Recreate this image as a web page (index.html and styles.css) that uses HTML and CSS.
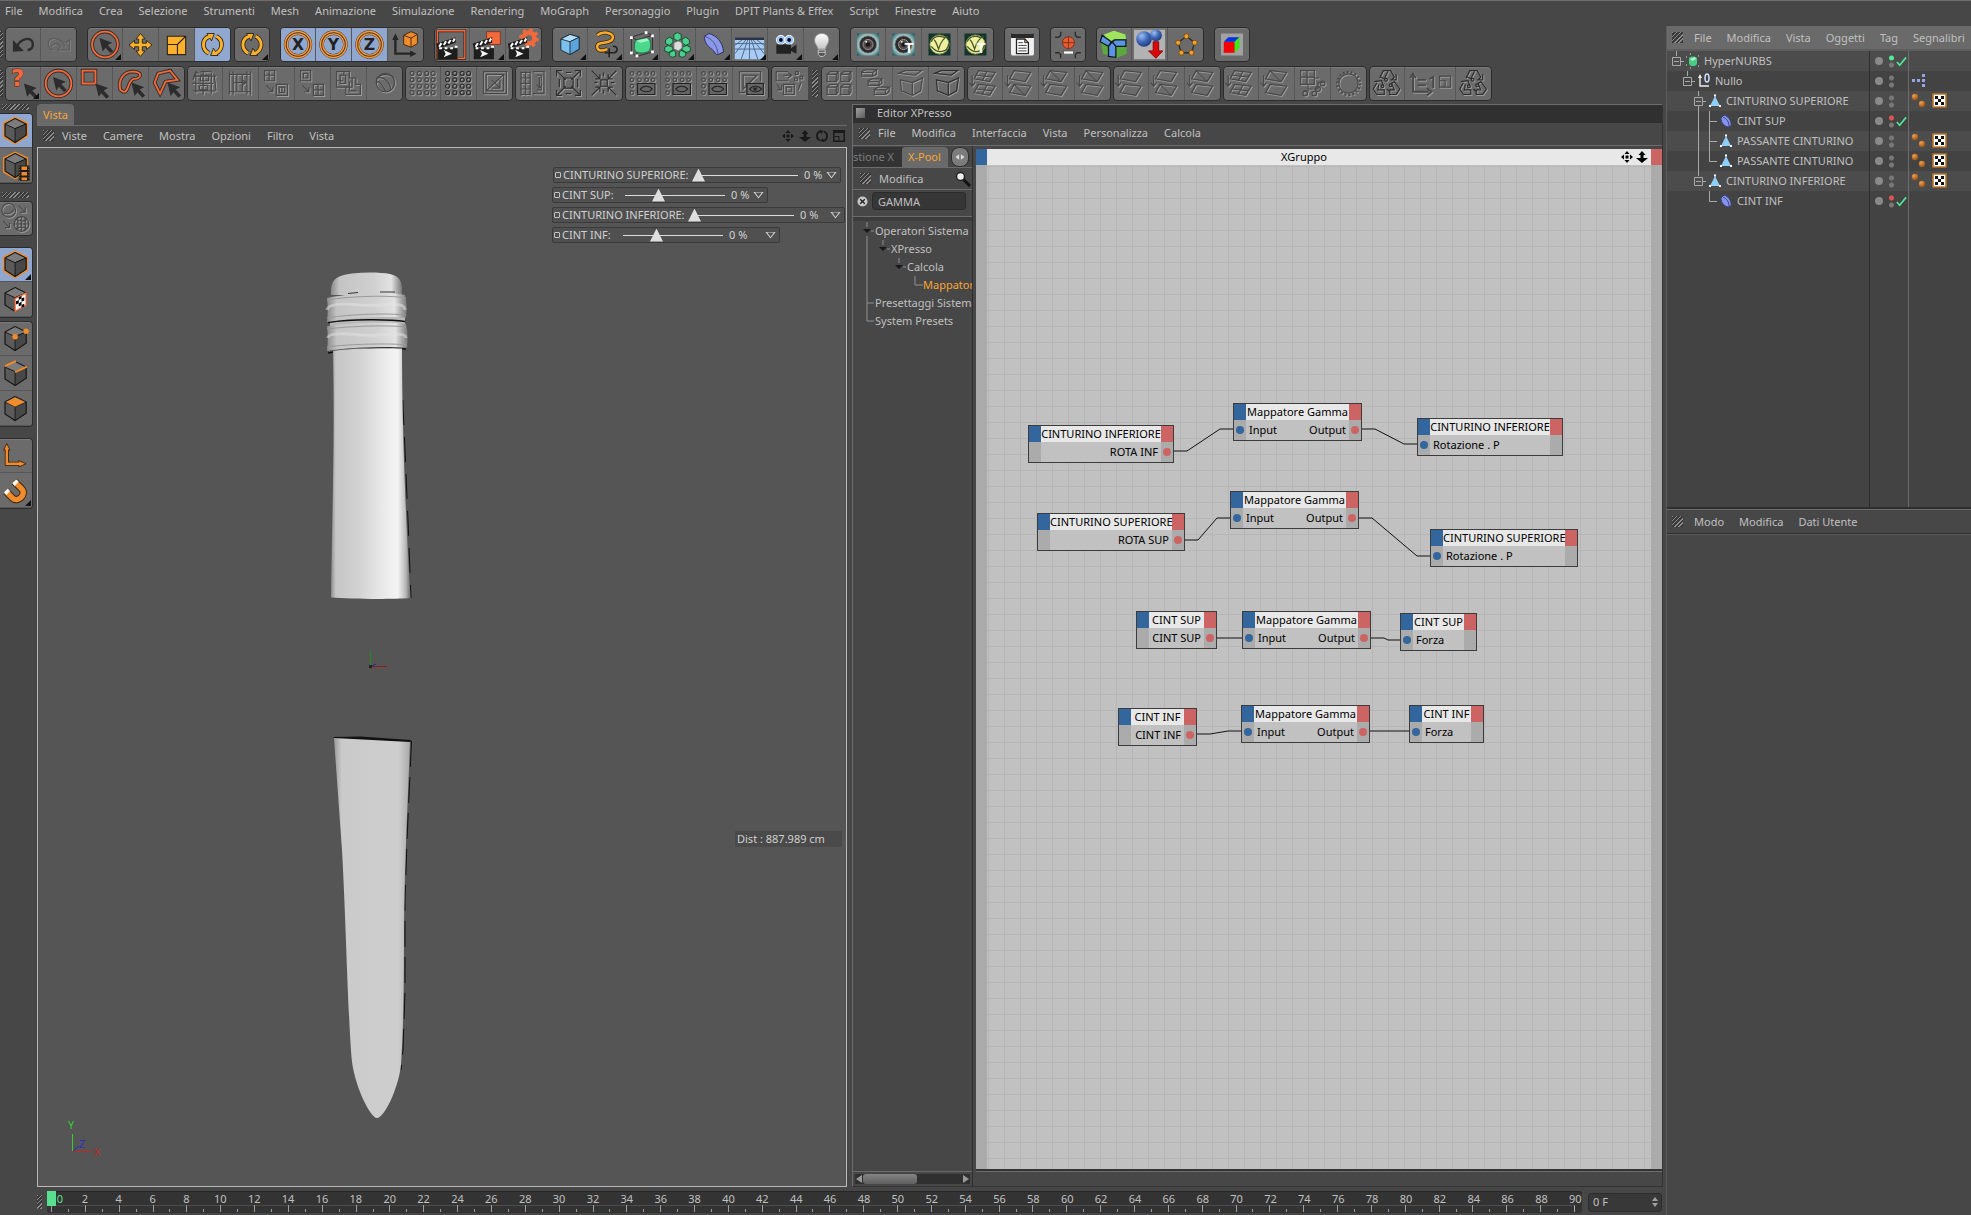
FILE: index.html
```html
<!doctype html>
<html lang="it">
<head>
	<meta charset="utf-8">
	<title>Editor XPresso</title>
	<meta name="viewport" content="width=device-width, initial-scale=1">
	<link rel="stylesheet" href="styles.css">
</head>
<body>
	<svg class="sprite" xmlns="http://www.w3.org/2000/svg">
		<defs>
			<linearGradient id="strap" x1="0" x2="1" y1="0" y2="0">
				<stop offset="0" stop-color="#8c8c8c"></stop>
				<stop offset=".06" stop-color="#c6c6c6"></stop>
				<stop offset=".35" stop-color="#d2d2d2"></stop>
				<stop offset=".7" stop-color="#ededed"></stop>
				<stop offset=".84" stop-color="#f4f4f4"></stop>
				<stop offset=".94" stop-color="#b8b8b8"></stop>
				<stop offset="1" stop-color="#6a6a6a"></stop>
			</linearGradient>
			<linearGradient id="strap-low" x1="0" x2="1" y1="0" y2="0">
				<stop offset="0" stop-color="#9a9a9a"></stop>
				<stop offset=".1" stop-color="#cacaca"></stop>
				<stop offset=".85" stop-color="#cecece"></stop>
				<stop offset="1" stop-color="#a8a8a8"></stop>
			</linearGradient>
			<linearGradient id="band" x1="0" x2="1" y1="0" y2="0">
				<stop offset="0" stop-color="#8a8a8a"></stop>
				<stop offset=".12" stop-color="#c4c4c4"></stop>
				<stop offset=".6" stop-color="#d0d0d0"></stop>
				<stop offset=".85" stop-color="#e2e2e2"></stop>
				<stop offset="1" stop-color="#777777"></stop>
			</linearGradient>
			<radialGradient id="ball" cx=".35" cy=".3" r=".8">
				<stop offset="0" stop-color="#9cc0f4"></stop>
				<stop offset=".5" stop-color="#3e68b8"></stop>
				<stop offset="1" stop-color="#1c3470"></stop>
			</radialGradient>
			<radialGradient id="bronze" cx=".35" cy=".3" r=".8">
				<stop offset="0" stop-color="#f0a04c"></stop>
				<stop offset="1" stop-color="#8a4a10"></stop>
			</radialGradient>
			<radialGradient id="lens" cx=".5" cy=".5" r=".7">
				<stop offset=".5" stop-color="#c8ecec"></stop>
				<stop offset="1" stop-color="#0f4a50"></stop>
			</radialGradient>
			<linearGradient id="glow" x1="0" x2="0" y1="0" y2="1">
				<stop offset="0" stop-color="#ffffff"></stop>
				<stop offset="1" stop-color="#c4c4c4"></stop>
			</linearGradient>
		</defs>

		<symbol id="cursor" viewBox="0 0 36 36">
			<path d="M12 11L26 16L21 18.500L27 25L24 27.500L18.500 21.500L15.500 25.500z" fill="#2c2c2c"></path>
		</symbol>
		<symbol id="undo" viewBox="0 0 36 36">
			<path d="M11 21C15 11 27 9 28.500 16C29.500 21 27 24 23 24" fill="none" stroke="#2c2c2c" stroke-width="2.600"></path>
			<path d="M7 13V26L19 25z" fill="#2c2c2c"></path>
		</symbol>
		<symbol id="redo" viewBox="0 0 36 36">
			<path d="M25 20C21 10 8 9 7 15C6 21 9 24 13 24M10 20C12 17 16 15 20 20L18 24H30V13L26 16"></path>
		</symbol>
		<symbol id="live" viewBox="0 0 36 36">
			<circle cx="18" cy="18" r="14" fill="none" stroke="#3a2c26" stroke-width="4"></circle>
			<circle cx="18" cy="18" r="14" fill="none" stroke="#f26a3c" stroke-width="2"></circle>
			<use href="#cursor"></use>
		</symbol>
		<symbol id="move" viewBox="0 0 36 36">
			<path d="M18 6l5 6h-3v4.500h4.500v-3l6 5-6 5v-3H20V25h3l-5 6-5-6h3v-4.500h-4.500v3l-6-5 6-5v3H16V12h-3z" fill="#fbb12c" stroke="#2c2416"></path>
		</symbol>
		<symbol id="scale" viewBox="0 0 36 36">
			<path d="M8 9H28V29H8zM8 18H19V29M19 18L28 9" fill="#fbb12c" stroke="#2c2416" stroke-width="1.200"></path>
		</symbol>
		<symbol id="rotate" viewBox="0 0 36 36">
			<path d="M14 27.500C6 23 6 12 15 9M22 9C30 13 30 24 21 28" fill="none" stroke="#2c2416" stroke-width="5"></path>
			<path d="M12 6H20L17 14zM24 30H16L19 22z" fill="#fbb12c" stroke="#2c2416"></path>
			<path d="M14 27.500C6 23 6 12 15 9M22 9C30 13 30 24 21 28" fill="none" stroke="#fbb12c" stroke-width="3.200"></path>
		</symbol>
		<symbol id="ring" viewBox="0 0 36 36">
			<circle cx="18" cy="18" r="13" fill="none" stroke="#4c3424" stroke-width="5"></circle>
			<circle cx="18" cy="18" r="14.200" fill="none" stroke="#f39a3c" stroke-width="1.600"></circle>
			<circle cx="18" cy="18" r="11.600" fill="none" stroke="#f39a3c" stroke-width="1.400"></circle>
		</symbol>
		<symbol id="coord" viewBox="0 0 36 36">
			<path d="M7 10V28H26" fill="none" stroke="#262626" stroke-width="2.600"></path>
			<path d="M3.500 13L7 6L10.500 13zM23 24.500L30 28L23 31.500z" fill="#262626"></path>
			<path d="M16 8L24 4L31 7V17L24 21L16 18z" fill="#f08c2c" stroke="#3c2410"></path>
			<path d="M16 8L24 11L31 7M24 11V21" fill="none" stroke="#3c2410"></path>
		</symbol>
		<symbol id="clap" viewBox="0 0 36 36">
			<path d="M2 22H24V34H2zM1 17L22 10V16L2 23z" fill="#1d1d1d"></path>
			<path d="M4 20.500l2.500-4M9 18.500l2.500-4M14 17l2.500-4M19 15l2-3.500M4 22h3M10 22h3M16 22h3M21 20.500h3" stroke="#fff" stroke-width="2.200"></path>
			<path d="M9 24l9 4-9 4 2-4z" fill="#f4f4f4"></path>
		</symbol>
		<symbol id="render" viewBox="0 0 36 36">
			<path d="M2 3H32V33H2z" fill="none" stroke="#3c2418" stroke-width="3"></path>
			<path d="M2 3H32V33H2z" fill="none" stroke="#f26a3c" stroke-width="1.400"></path>
			<use href="#clap"></use>
		</symbol>
		<symbol id="render-pic" viewBox="0 0 36 36">
			<path d="M17 4H32V18H17z" fill="#f26a3c" stroke="#7c3820"></path>
			<use href="#clap" x="1"></use>
		</symbol>
		<symbol id="render-set" viewBox="0 0 36 36">
			<circle cx="24" cy="11" r="6" fill="none" stroke="#f26a3c" stroke-width="5"></circle>
			<circle cx="24" cy="11" r="9" fill="none" stroke="#f26a3c" stroke-width="3.500" stroke-dasharray="3.500 3.560"></circle>
			<use href="#clap"></use>
		</symbol>
		<symbol id="cube" viewBox="0 0 36 36">
			<path d="M8 12L18 7L28 10V23L18 29L8 24z" fill="#7cc0f0" stroke="#1e2a34"></path>
			<path d="M8 12L18 7L28 10L18 15z" fill="#b4e0fc" stroke="#1e2a34"></path>
			<path d="M18 15V29L28 23V10z" fill="#5ca4dc" stroke="#1e2a34"></path>
		</symbol>
		<symbol id="spline" viewBox="0 0 36 36">
			<path d="M9 8C16 2 30 6 25 13C20 18 8 14 9 21C10 26 15 25 20 23" fill="none" stroke="#3a2a10" stroke-width="4.500"></path>
			<path d="M9 8C16 2 30 6 25 13C20 18 8 14 9 21C10 26 15 25 20 23" fill="none" stroke="#f9a92c" stroke-width="2.800"></path>
			<path d="M22 22V32M17 27H27C32 27 32 19 26 20" fill="none" stroke="#222" stroke-width="1.800"></path>
		</symbol>
		<symbol id="nurbs" viewBox="0 0 36 36">
			<path d="M7 10L23 5L30 8V26L13 31L7 27zM7 10L13 13L30 8M13 13V31" fill="none" stroke="#2e2e2e"></path>
			<path d="M11 15C12 12 25 10 27 13C29 16 28 24 26 25C23 28 13 28 11 25C10 22 10 18 11 15z" fill="#4cd88c" stroke="#1c6a40"></path>
			<path d="M12 14L24 11L26 14L17 16z" fill="#a0f4c4"></path>
			<path d="M5.500 9h3v3h-3zM21.500 3.500h3v3h-3zM28.500 7h3v3h-3zM28.500 24.500h3v3h-3zM11.500 29h3v3h-3zM5.500 25.500h3v3h-3z" fill="#fff"></path>
		</symbol>
		<symbol id="array" viewBox="0 0 36 36">
			<g fill="#4ad08c" stroke="#14482c">
				<path d="M14 7l4-2 4 2v5l-4 2-4-2zM5 13l4-3 4 2v4l-4 3-4-2zM23 12l4-2 4 3v4l-4 2-4-3zM4 21l4-2 5 2v4l-4 2-5-2zM23 21l5-2 4 2v4l-5 2-4-2zM9 26l4-2 3 2v5l-4 1-3-2zM20 26l3-2 4 2v4l-3 2-4-1z"></path>
			</g>
			<path d="M14 16l5-2 4 2v6l-4 3-5-2z" fill="#dcdcdc" stroke="#666"></path>
		</symbol>
		<symbol id="deform" viewBox="0 0 36 36">
			<path d="M8 9L13 6C21 8 28 15 29 26L23 29C20 29 20 28 19 26L15 22C12 20 8 16 8 9z" fill="#8c98e8" stroke="#282c58"></path>
			<path d="M8 9C16 11 22 18 23 29" fill="none" stroke="#444c90"></path>
		</symbol>
		<symbol id="floor" viewBox="0 0 36 36">
			<path d="M2 10H34V34H2z" fill="#a8ccf4"></path>
			<path d="M2 10H34V13H2z" fill="#2c3440"></path>
			<path d="M2 17H34M2 23H34M14 13L2 28M18 13V34M22 13L34 28M16 13L9 34M20 13L27 34M10 13L2 19M26 13L34 19" stroke="#4a6484" fill="none"></path>
		</symbol>
		<symbol id="camera" viewBox="0 0 36 36">
			<circle cx="13" cy="13" r="5" fill="#9cc4f4" stroke="#fff"></circle>
			<circle cx="22" cy="13" r="5" fill="#9cc4f4" stroke="#fff"></circle>
			<circle cx="13" cy="13" r="2"></circle><circle cx="22" cy="13" r="2"></circle>
			<path d="M8 18H24V22L30 18V28L24 25V28H8z" fill="#222"></path>
		</symbol>
		<symbol id="bulb" viewBox="0 0 36 36">
			<path d="M14 23C14 19 10 18 10.500 12C12 4 25 4 26 12C26 18 22.500 19 22.500 23z" fill="url(#glow)" stroke="#909090"></path>
			<path d="M14.500 24H22V29L20 31H16.500L14.500 29zM15 26.500H22" fill="#555" stroke="#ccc"></path>
		</symbol>
		<symbol id="lens-icon" viewBox="0 0 36 36">
			<path d="M6 6H30V30H6z" fill="url(#lens)"></path>
			<circle cx="18" cy="18" r="9.500" fill="#2c2c2c" stroke="#888"></circle>
			<circle cx="18" cy="18" r="5.500" fill="#544848" stroke="#a09898"></circle>
			<circle cx="18" cy="18" r="2.500" fill="#18181c"></circle><circle cx="16" cy="15" r="1" fill="#fff"></circle>
		</symbol>
		<symbol id="vray" viewBox="0 0 36 36">
			<path d="M6 6H30V30H6z" fill="#12362c"></path>
			<circle cx="18" cy="18" r="10.500" fill="#ecf0a0" stroke="#7c8450"></circle>
			<path d="M12 13C14 14 15 18 17 23C19 16 22 11 27 9M9 20C16 29 27 27 28 17M9 15C12 8 21 8 24 11" fill="none" stroke="#4c5424" stroke-width="1.400"></path>
		</symbol>
		<symbol id="doc" viewBox="0 0 36 36">
			<rect x="6" y="6" width="25" height="24" rx="2" fill="#f0f0f0"></rect>
			<path d="M6 6H31V11H6z" fill="#2a2a2a"></path>
			<path d="M12 12H21L25 16V28H12z" fill="#fff" stroke="#222" stroke-width="1.400"></path>
			<path d="M21 12V16H25z" fill="#e0a050" stroke="#222"></path>
			<path d="M14 16H19M14 19H23M14 22H23M14 25H23" stroke="#333"></path>
		</symbol>
		<symbol id="basket" viewBox="0 0 36 36">
			<path d="M4 10H8L10 8V4M32 10H28L26 8V4M4 27H8L10 29V33M32 27H28L26 29V33" fill="none" stroke="#2e2e2e" stroke-width="1.600"></path>
			<circle cx="18.500" cy="16" r="6.500" fill="#e85c34" stroke="#7c2c14"></circle>
			<path d="M12 16H25M18.500 9.500V22.500" stroke="#7c2c14"></path>
			<path d="M13 25H24V28.500H13z" fill="#fff" stroke="#555"></path>
		</symbol>
		<symbol id="greenbox" viewBox="0 0 36 36">
			<path d="M3 11L17 3L31 7L32 28L20 33L6 28z" fill="#5ca83c"></path>
			<path d="M7 7L18 3L30 7L31 12L18 12L12 16z" fill="#a0e45c"></path>
			<path d="M5 8L15 15L12 20L3 15zM19 13H31V20H20L16 15zM12 20L16 15L20 20V32L12 31z" fill="#5c94e4" stroke="#101820" stroke-width="1.400"></path>
		</symbol>
		<symbol id="balls" viewBox="0 0 36 36">
			<path d="M1 2H35V34H1z" fill="#b2b2b2"></path>
			<circle cx="12" cy="12" r="8.500" fill="url(#ball)"></circle>
			<circle cx="25" cy="8" r="6.500" fill="url(#ball)"></circle>
			<path d="M22 15H28V25H32.500L25 33L17 25H22z" fill="#dc0808" stroke="#8c0404"></path>
		</symbol>
		<symbol id="penta" viewBox="0 0 36 36">
			<path d="M19 9L28 16L24.500 27H13.500L10 16z" fill="none" stroke="#2e2e2e" stroke-width="1.500"></path>
			<g fill="#f8a02c" stroke="#7c4c10"><circle cx="19" cy="9" r="2.700"></circle><circle cx="28" cy="16" r="2.700"></circle><circle cx="24.500" cy="27" r="2.700"></circle><circle cx="13.500" cy="27" r="2.700"></circle><circle cx="10" cy="16" r="2.700"></circle></g>
		</symbol>
		<symbol id="rgb" viewBox="0 0 36 36">
			<path d="M6 6H30V30H6z" fill="#a2a2a2"></path>
			<path d="M9 15H21V27H9z" fill="#f40000"></path><path d="M9 15L14 10H26L21 15z" fill="#0030e0"></path><path d="M21 15L26 10V21L21 27z" fill="#2cf400"></path>
		</symbol>
		<symbol id="rectsel" viewBox="0 0 36 36">
			<path d="M5 4H19V18H5z" fill="none" stroke="#3a2c26" stroke-width="4"></path><path d="M5 4H19V18H5z" fill="none" stroke="#f26a3c" stroke-width="2"></path>
			<use href="#cursor" x="7" y="7"></use>
		</symbol>
		<symbol id="lasso" viewBox="0 0 36 36">
			<path d="M7 25C4 15 10 5 20 5C32 5 30 13 22 13C15 14 16 29 10 27z" fill="none" stroke="#3a2c26" stroke-width="4"></path><path d="M7 25C4 15 10 5 20 5C32 5 30 13 22 13C15 14 16 29 10 27z" fill="none" stroke="#f26a3c" stroke-width="2"></path>
			<use href="#cursor" x="7" y="6"></use>
		</symbol>
		<symbol id="polysel" viewBox="0 0 36 36">
			<path d="M9 7L22 4L30 14L17 16L11 29L5 17z" fill="none" stroke="#3a2c26" stroke-width="4"></path><path d="M9 7L22 4L30 14L17 16L11 29L5 17z" fill="none" stroke="#f26a3c" stroke-width="2"></path>
			<use href="#cursor" x="7" y="6"></use>
		</symbol>

		<!-- pressed icons, coloured by .emboss -->
		<symbol id="e-loop" viewBox="0 0 36 36"><path d="M8 6V28M16 4V30M25 6V29M5 10H30M4 18H27M5 26H29M5 14l3-9 3 2M13 5h12M28 8l2 18M6 26h18M13 9h9v6h-9zM12 20h9v5h-9z"></path></symbol>
		<symbol id="e-ring" viewBox="0 0 36 36"><path d="M6 5V30M10 5V30M25 5V30M29 5V30M6 8H29M6 27H29M14 8V27M20 8V27M11 17H23M20 14L24 17L20 20"></path></symbol>
		<symbol id="e-grow" viewBox="0 0 36 36"><path d="M5 4H16V15H5zM10 4V15M5 9H16M18 19H30V31H18zM21 22H27V28H21zM24 22V28M7 20L14 27M14 22V27H9"></path></symbol>
		<symbol id="e-shrink" viewBox="0 0 36 36"><path d="M5 4H16V15H5zM8 7H13V12H8zM19 19H30V31H19zM24 19V31M19 25H30M7 20L14 27M14 22V27H9"></path></symbol>
		<symbol id="e-fill" viewBox="0 0 36 36"><path d="M5 5H19V12H26V19H31V30H15V22H5zM9 9H15V18H9zM19 16V26H27M5 15H12M13 5V9M15 22H22V12"></path></symbol>
		<symbol id="e-sphere" viewBox="0 0 36 36"><circle cx="19" cy="17" r="10"></circle><path d="M9 13C14 7 24 7 28 12M11 12C17 10 25 18 25 25M9 17C13 13 18 25 20 27"></path></symbol>
		<symbol id="e-dots" viewBox="0 0 36 36"><g><circle cx="6" cy="7" r="2.200"></circle><circle cx="14" cy="7" r="2.200"></circle><circle cx="22" cy="7" r="2.200"></circle><circle cx="29" cy="7" r="2.200"></circle><circle cx="6" cy="14" r="2.200"></circle><circle cx="14" cy="14" r="2.200"></circle><circle cx="22" cy="14" r="2.200"></circle><circle cx="29" cy="14" r="2.200"></circle><circle cx="6" cy="21" r="2.200"></circle><circle cx="14" cy="21" r="2.200"></circle><circle cx="22" cy="21" r="2.200"></circle><circle cx="29" cy="21" r="2.200"></circle><circle cx="6" cy="28" r="2.200"></circle><circle cx="14" cy="28" r="2.200"></circle><circle cx="22" cy="28" r="2.200"></circle><circle cx="29" cy="28" r="2.200"></circle></g></symbol>
		<symbol id="e-poly" viewBox="0 0 36 36"><path d="M6 5H31V29H6zM9 8H28V26H9zM9 26L28 8M15 14L24 23M24 14V23H15"></path></symbol>
		<symbol id="e-convert" viewBox="0 0 36 36"><path d="M18 5H30V29H18M22 9H27V25H22M25 11V22M22 19L25 23L28 19M4 6H15M4 12H15M4 18H15M4 24H15M4 30H15M5 5V31M10 5V31M15 5V31"></path></symbol>
		<symbol id="e-out" viewBox="0 0 36 36"><path d="M6 5L15 14M30 5L21 14M6 30L15 21M30 30L21 21M5 10V4H11M25 4H31V10M5 25V31H11M25 31H31V25M13 12H23V23H13zM15 6H21M15 29H21M8 13V22M28 13V22"></path></symbol>
		<symbol id="e-in" viewBox="0 0 36 36"><path d="M4 4L13 13M31 4L22 13M4 31L13 22M31 31L22 22M13 8V13H8M22 8V13H27M8 22H13V27M27 22H22V27M14 14H21V21H14zM7 17H10M25 17H29M17 6V10M17 25V29"></path></symbol>
		<symbol id="e-dotseye" viewBox="0 0 36 36"><g><circle cx="6" cy="7" r="2"></circle><circle cx="14" cy="7" r="2"></circle><circle cx="22" cy="7" r="2"></circle><circle cx="29" cy="7" r="2"></circle><circle cx="6" cy="14" r="2"></circle><circle cx="14" cy="14" r="2"></circle><circle cx="22" cy="14" r="2"></circle><circle cx="29" cy="14" r="2"></circle><circle cx="6" cy="21" r="2"></circle><circle cx="6" cy="28" r="2"></circle></g><path d="M12 18H31V30H12zM15 24C18 20 25 20 28 24C25 28 18 28 15 24z" fill="#666" stroke="#222" stroke-width="1.300"></path></symbol>
		<symbol id="e-polyeye" viewBox="0 0 36 36"><path d="M6 5H29V15M6 5V28H12M10 9H25L10 24z"></path><path d="M14 18H32V30H14zM17 24C20 20 27 20 30 24C27 28 20 28 17 24z" fill="#666" stroke="#222" stroke-width="1.300"></path><circle cx="23" cy="24" r="2" fill="#222"></circle></symbol>
		<symbol id="e-swap" viewBox="0 0 36 36"><path d="M4 5H17M4 5V15H17M12 9H20M17 6L21 9L17 12M25 5h3v3h-3zM30 10h3v3h-3zM24 12h3v3h-3zM12 19H24V30H12zM15 22H21V27H15zM5 19L9 25M31 17L28 25M5 25H10V20"></path></symbol>
		<symbol id="e-cubes" viewBox="0 0 36 36"><path d="M5 8L8 5H17L15 8zM5 8H15V16H5zM15 16L17 13V5M20 8L23 5H31L29 8zM20 8H29V16H20zM29 16L31 13V5M5 22L8 19H17L15 22zM5 22H15V30H5zM15 30L17 27V19M20 22L23 19H31L29 22zM20 22H29V30H20zM29 30L31 27V19"></path></symbol>
		<symbol id="e-bricks" viewBox="0 0 36 36"><path d="M4 5L8 3H20L16 6H4zM4 6V10H16V6M16 10L20 8V3M11 15L15 13H26L23 16H11zM11 16V20H23V16M23 20L26 18V13M18 24L22 22H34L30 25H18zM18 25V30H30V25M30 30L34 27V22"></path></symbol>
		<symbol id="e-open" viewBox="0 0 36 36"><path d="M7 14L20 17L31 12L29 26L20 31L8 26zM20 17V31M5 7L12 4H30L23 9z"></path></symbol>
		<symbol id="e-quad" viewBox="0 0 36 36"><path d="M4 9V20M1 17L4 21L7 17M11 4L29 6L23 16L6 13zM11 19L29 21L23 31L6 28z"></path></symbol>
		<symbol id="e-grid" viewBox="0 0 36 36"><use href="#e-quad"></use><path d="M9 9L26 11M20 5L15 15M9 24L26 26M20 20L15 30"></path></symbol>
		<symbol id="e-diag" viewBox="0 0 36 36"><use href="#e-quad"></use><path d="M11 4L23 16"></path></symbol>
		<symbol id="e-diag2" viewBox="0 0 36 36"><use href="#e-quad"></use><path d="M11 19L23 31"></path></symbol>
		<symbol id="e-map" viewBox="0 0 36 36"><path d="M5 4H20V19H5zM12 4V19M5 11H20M20 12H25M13 20V24H18M8 26H14M20 24H24V17H30"></path><circle cx="29" cy="18" r="2.500"></circle><circle cx="24" cy="24" r="2.500"></circle><circle cx="10" cy="29" r="2.500"></circle><circle cx="20" cy="29" r="2.500"></circle></symbol>
		<symbol id="e-gear" viewBox="0 0 36 36"><circle cx="18" cy="18" r="10.500"></circle><circle cx="18" cy="18" r="12.500" stroke-width="2.500" stroke-dasharray="2 2.360"></circle></symbol>
		<symbol id="e-recycle" viewBox="0 0 36 36"><path d="M10 12L14 4H22L26 11L23 14M19 5L15 13L10 10M26 16L32 24L28 30H21V25H26L23 18zM4 16L12 15L14 20M9 19L8 25H15V30H7L3 24L7 17M21 27L18 24M22 14H28V8"></path><circle cx="17" cy="14" r="1.500"></circle><circle cx="22" cy="20" r="1.500"></circle><circle cx="13" cy="21" r="1.500"></circle></symbol>
		<symbol id="e-one" viewBox="0 0 51 36"><path d="M7 10V27H24M4 12L7 7L10 12M22 23L27 27L22 31M12 14H21M12 20H21M25 13L29 11V23" stroke-width="2"></path><path d="M36 10H48V22H36zM36 15H42V22"></path></symbol>
		<symbol id="e-globe" viewBox="0 0 32 36"><circle cx="8" cy="9" r="7.500"></circle><circle cx="22" cy="24" r="8"></circle><path d="M2 12C7 14 12 12 14 8M14 24H30M22 16V32M16 19C20 21 25 21 28 19M16 29C20 27 25 27 28 29M18 17V31M26 17V31M19 4L26 11M26 6V11H21M2 21L9 28M9 23V28H4"></path></symbol>

		<!-- grey box used by the mode palette -->
		<symbol id="box" viewBox="0 0 32 36">
			<path d="M4 11L15 5L27 11V23L15 31L4 24z" fill="#5a5a5a" stroke="#161616" stroke-width="1.300"></path>
			<path d="M4 11L15 5L27 11L15 16z" fill="#7c7c7c" stroke="#161616"></path>
			<path d="M15 16V31L27 23V11z" fill="#484848" stroke="#161616"></path>
		</symbol>
		<symbol id="box-hot" viewBox="0 0 32 36">
			<path d="M3 10L15 4L28 10V24L15 32L3 25z" fill="none" stroke="#f08c2c" stroke-width="2.400"></path>
			<use href="#box"></use>
		</symbol>
		<symbol id="box-film" viewBox="0 0 32 36">
			<use href="#box-hot"></use>
			<path d="M19 18H31V35H19z" fill="#1e1e1e"></path><path d="M22 19H28V23H22zM22 25H28V29H22zM22 31H28V34H22z" fill="#f08c2c"></path>
			<path d="M20 19V35M30 19V35" stroke="#c87828" stroke-dasharray="1 2"></path>
		</symbol>
		<symbol id="box-check" viewBox="0 0 32 36">
			<use href="#box"></use>
			<path d="M15 17L27 11V24L15 31z" fill="#fff" stroke="#f06c3c" stroke-width="1.500"></path>
			<path d="M16 20l3-1.500v3.500l-3 1.500zM22 17l3-1.500v3.500l-3 1.500zM19 22l3-1.500v3.500l-3 1.500zM22 24l3-1.500v3l-3 1.500zM19 15.500l3-1.500v3l-3 1.500z" fill="#000"></path>
		</symbol>
		<symbol id="box-points" viewBox="0 0 32 36">
			<use href="#box"></use>
			<circle cx="15" cy="16" r="3" fill="#f08c2c"></circle><circle cx="27" cy="10" r="3" fill="#f08c2c"></circle>
		</symbol>
		<symbol id="box-edge" viewBox="0 0 32 36"><use href="#box"></use><path d="M4 10L16 4.500M15 16.500L28 10.500" stroke="#f08c2c" stroke-width="2.400"></path></symbol>
		<symbol id="box-face" viewBox="0 0 32 36"><use href="#box"></use><path d="M5 11L15 6L26 11L15 16z" fill="#f08c2c"></path></symbol>
		<symbol id="axis" viewBox="0 0 32 36">
			<path d="M6 10V27H21" fill="none" stroke="#3c2410" stroke-width="4.500"></path>
			<path d="M2.500 12L6 5L9.500 12zM19 23.500L27 27L19 30.500z" fill="#f08c2c" stroke="#3c2410"></path>
			<path d="M6 10V27H21" fill="none" stroke="#f08c2c" stroke-width="2.600"></path>
		</symbol>
		<symbol id="magnet" viewBox="0 0 32 36">
			<path d="M5 19L12 26C18 32 28 22 22 16L14 8" fill="none" stroke="#3c2410" stroke-width="8"></path>
			<path d="M5 19L12 26C18 32 28 22 22 16L14 8" fill="none" stroke="#f08c2c" stroke-width="6"></path>
			<path d="M3 20L7 16L9.500 18.500L5.500 23zM12 10L16.500 6L19 8.500L14.500 13z" fill="#fff"></path>
		</symbol>

		<symbol id="v-move" viewBox="0 0 12 12"><path d="M6 0l2.500 3h-5zM6 12l2.500-3h-5zM0 6l3-2.500v5zM12 6l-3-2.500v5zM4.500 4.500h3v3h-3z"></path></symbol>
		<symbol id="v-zoom" viewBox="0 0 12 12"><path d="M6 0l3.500 4H7.500v3H12L6 12L0 7H4.500V4H2.500z"></path></symbol>
		<symbol id="v-turn" viewBox="0 0 12 12"><path d="M4 10.500A5 5 0 0 1 5 1M8 1.500A5 5 0 0 1 7 11" fill="none" stroke="currentColor" stroke-width="1.800"></path><path d="M4 0l4 1-3 3zM8 12l-4-1 3-3z"></path></symbol>
		<symbol id="v-full" viewBox="0 0 12 12"><path d="M0 0h12v12H0zM1.500 3v7.500h9V3z" fill-rule="evenodd"></path><path d="M1.500 6.500H6v4" fill="none" stroke="currentColor"></path></symbol>

		<symbol id="o-nurbs" viewBox="0 0 14 16"><path d="M0 4h1M4 1h1M12 3h1M0 12h1M12 13h1M4 15h1" stroke="#ddd"></path><path d="M3 5C5 3 9 3 11 5V11C9 14 5 14 3 11z" fill="#46cc84"></path><path d="M4 6L9 4L10 6L6 8z" fill="#b0f8d0"></path></symbol>
		<symbol id="o-null" viewBox="0 0 14 16"><path d="M3 3V13H12" fill="none" stroke="#eee" stroke-width="1.400"></path><path d="M1 5L3 1L5 5z" fill="#eee"></path><ellipse cx="10" cy="5" rx="2" ry="4" fill="none" stroke="#cfe0ff" stroke-width="1.500"></ellipse></symbol>
		<symbol id="o-poly" viewBox="0 0 14 16"><path d="M7 3L12 13H2z" fill="#90d0f8"></path><path d="M6 1.500h2v2H6zM1 12h2v2H1zM11 12h2v2h-2z" fill="#fff"></path></symbol>
		<symbol id="o-bend" viewBox="0 0 14 16"><path d="M2 5L5 2C9 3 13 8 12 13L9 14C5 13 2 10 2 5z" fill="#8494ec" stroke="#39407c"></path><path d="M4 4C8 6 10 9 10 13" fill="none" stroke="#39407c"></path></symbol>
		<symbol id="o-tags" viewBox="0 0 36 20"><circle cx="4" cy="6" r="3.200" fill="url(#bronze)"></circle><circle cx="11" cy="13" r="3.200" fill="url(#bronze)"></circle>
			<path d="M22 3H35V16H22z" fill="#fff" stroke="#b87028" stroke-width="1.600"></path><path d="M24 5h3v3h-3zM30 5h3v3h-3zM27 8h3v3h-3zM24 11h3v3h-3zM30 11h3v3h-3z" fill="#111"></path></symbol>
		<symbol id="o-xp" viewBox="0 0 36 20"><path d="M1 8h3v3H1zM6 8h3v3H6zM11 8h3v3h-3zM11 3h3v3h-3zM11 13h3v3h-3z" fill="#94a4e4"></path></symbol>
		<symbol id="o-tick" viewBox="0 0 12 12"><path d="M1 6.500L4 10L11 1.500" fill="none" stroke="#50e898" stroke-width="1.800"></path></symbol>
	</svg>

	<nav class="menu main-menu">
		<a href="#">File</a><a href="#">Modifica</a><a href="#">Crea</a><a href="#">Selezione</a><a href="#">Strumenti</a><a href="#">Mesh</a><a href="#">Animazione</a><a href="#">Simulazione</a><a href="#">Rendering</a><a href="#">MoGraph</a><a href="#">Personaggio</a><a href="#">Plugin</a><a href="#">DPIT Plants &amp; Effex</a><a href="#">Script</a><a href="#">Finestre</a><a href="#">Aiuto</a>
	</nav>

	<main>
		<div class="toolbar top">
			<i class="grip tall"></i>
			<div class="group"><button aria-label="Annulla"><svg><use href="#undo"></use></svg></button><button aria-label="Ripeti"><svg class="emboss"><use href="#redo"></use></svg></button></div>
			<div class="group"><button class="more" aria-label="Selezione"><svg><use href="#live"></use></svg></button><button aria-label="Muovi"><svg><use href="#move"></use></svg></button><button aria-label="Scala"><svg><use href="#scale"></use></svg></button><button class="on" aria-label="Ruota"><svg><use href="#rotate"></use></svg></button></div>
			<div class="group near"><button class="more" aria-label="Ultimo strumento"><svg><use href="#rotate"></use></svg></button></div>
			<div class="group"><button class="on" aria-label="Asse X"><svg viewBox="0 0 36 36"><use href="#ring"></use><text class="axis-letter" x="18" y="24">X</text></svg></button><button class="on" aria-label="Asse Y"><svg viewBox="0 0 36 36"><use href="#ring"></use><text class="axis-letter" x="18" y="24">Y</text></svg></button><button class="on" aria-label="Asse Z"><svg viewBox="0 0 36 36"><use href="#ring"></use><text class="axis-letter" x="18" y="24">Z</text></svg></button><button aria-label="Coordinate"><svg><use href="#coord"></use></svg></button></div>
			<div class="group"><button aria-label="Renderizza vista"><svg><use href="#render"></use></svg></button><button class="more" aria-label="Renderizza"><svg><use href="#render-pic"></use></svg></button><button aria-label="Settaggi di rendering"><svg><use href="#render-set"></use></svg></button></div>
			<div class="group"><button class="more" aria-label="Cubo"><svg><use href="#cube"></use></svg></button><button class="more" aria-label="Spline"><svg><use href="#spline"></use></svg></button><button class="more" aria-label="NURBS"><svg><use href="#nurbs"></use></svg></button><button class="more" aria-label="Serie"><svg><use href="#array"></use></svg></button><button class="more" aria-label="Deformatore"><svg><use href="#deform"></use></svg></button><button class="more" aria-label="Pavimento"><svg><use href="#floor"></use></svg></button><button class="more" aria-label="Camera"><svg><use href="#camera"></use></svg></button><button class="more" aria-label="Luce"><svg><use href="#bulb"></use></svg></button></div>
			<div class="group"><button aria-label="Camera VRay"><svg><use href="#lens-icon"></use></svg></button><button aria-label="Tag camera"><svg viewBox="0 0 36 36"><use href="#lens-icon"></use><text class="tag-letter" x="24" y="27">T</text></svg></button><button aria-label="VRay"><svg><use href="#vray"></use></svg></button><button aria-label="Tag VRay"><svg viewBox="0 0 36 36"><use href="#vray"></use><text class="tag-letter" x="24" y="27">T</text></svg></button></div>
			<div class="group"><button aria-label="Script"><svg><use href="#doc"></use></svg></button></div>
			<div class="group"><button aria-label="Reticolo"><svg><use href="#basket"></use></svg></button></div>
			<div class="group"><button aria-label="Smusso"><svg><use href="#greenbox"></use></svg></button><button aria-label="Posa"><svg><use href="#balls"></use></svg></button><button aria-label="Punti"><svg><use href="#penta"></use></svg></button></div>
			<div class="group"><button aria-label="RGB"><svg><use href="#rgb"></use></svg></button></div>
		</div>

		<div class="toolbar second">
			<i class="grip tall"></i>
			<div class="group"><button class="more" aria-label="Aiuto selezione"><svg viewBox="0 0 36 36"><text class="help-mark" x="5" y="21">?</text><use href="#cursor" x="7" y="7"></use></svg></button><button aria-label="Selezione viva"><svg><use href="#live"></use></svg></button><button aria-label="Rettangolo"><svg><use href="#rectsel"></use></svg></button><button aria-label="Lazo"><svg><use href="#lasso"></use></svg></button><button aria-label="Poligono"><svg><use href="#polysel"></use></svg></button></div>
			<div class="group emboss"><button aria-label="Loop"><svg><use href="#e-loop"></use></svg></button><button aria-label="Anello"><svg><use href="#e-ring"></use></svg></button><button aria-label="Espandi"><svg><use href="#e-grow"></use></svg></button><button aria-label="Riduci"><svg><use href="#e-shrink"></use></svg></button><button aria-label="Riempi"><svg><use href="#e-fill"></use></svg></button><button aria-label="Phong"><svg><use href="#e-sphere"></use></svg></button></div>
			<div class="group emboss"><button aria-label="Tutto"><svg><use href="#e-dots"></use></svg></button><button class="deep" aria-label="Nulla"><svg><use href="#e-dots"></use></svg></button><button aria-label="Inverti"><svg><use href="#e-poly"></use></svg></button></div>
			<div class="group emboss"><button aria-label="Converti"><svg><use href="#e-convert"></use></svg></button><button class="deep" aria-label="Allarga"><svg><use href="#e-out"></use></svg></button><button class="deep" aria-label="Stringi"><svg><use href="#e-in"></use></svg></button></div>
			<div class="group emboss"><button aria-label="Nascondi"><svg><use href="#e-dotseye"></use></svg></button><button aria-label="Nascondi altri"><svg><use href="#e-dotseye"></use></svg></button><button aria-label="Mostra"><svg><use href="#e-dotseye"></use></svg></button><button aria-label="Mostra poligoni"><svg><use href="#e-polyeye"></use></svg></button></div>
			<div class="group emboss cut"><button aria-label="Scambia"><svg><use href="#e-swap"></use></svg></button></div>
			<i class="grip tall mid"></i>
			<div class="group emboss"><button aria-label="Cloner"><svg><use href="#e-cubes"></use></svg></button><button aria-label="Mattoni"><svg><use href="#e-bricks"></use></svg></button><button aria-label="Apri"><svg><use href="#e-open"></use></svg></button><button class="deep" aria-label="Chiudi"><svg><use href="#e-open"></use></svg></button></div>
			<div class="group emboss"><button aria-label="Suddividi"><svg><use href="#e-grid"></use></svg></button><button aria-label="Taglia"><svg><use href="#e-diag2"></use></svg></button><button aria-label="Coltello"><svg><use href="#e-diag"></use></svg></button><button aria-label="Ponte"><svg><use href="#e-diag"></use></svg></button></div>
			<div class="group emboss"><button aria-label="Quad"><svg><use href="#e-quad"></use></svg></button><button aria-label="Triangola"><svg><use href="#e-diag2"></use></svg></button><button aria-label="Detriangola"><svg><use href="#e-diag"></use></svg></button></div>
			<div class="group emboss"><button aria-label="Griglia"><svg><use href="#e-grid"></use></svg></button><button aria-label="Diagonale"><svg><use href="#e-diag"></use></svg></button><button aria-label="Mappa"><svg><use href="#e-map"></use></svg></button><button aria-label="Ottimizza"><svg><use href="#e-gear"></use></svg></button></div>
			<div class="group emboss"><button class="deep" aria-label="Ricicla"><svg><use href="#e-recycle"></use></svg></button><button class="wide" aria-label="Scala uno"><svg><use href="#e-one"></use></svg></button><button class="deep" aria-label="Ricicla tutto"><svg><use href="#e-recycle"></use></svg></button></div>
		</div>

		<div class="work">
			<div class="palette">
				<i class="grip flat"></i>
				<div class="group"><button class="on" aria-label="Modello"><svg><use href="#box-hot"></use></svg></button><button aria-label="Animazione"><svg><use href="#box-film"></use></svg></button></div>
				<i class="grip flat"></i>
				<div class="group emboss"><button aria-label="Rendi modificabile"><svg><use href="#e-globe"></use></svg></button></div>
				<div class="group apart"><button class="on more" aria-label="Oggetto"><svg><use href="#box-hot"></use></svg></button><button aria-label="Texture"><svg><use href="#box-check"></use></svg></button></div>
				<div class="group"><button aria-label="Punti"><svg><use href="#box-points"></use></svg></button><button aria-label="Bordi"><svg><use href="#box-edge"></use></svg></button><button aria-label="Poligoni"><svg><use href="#box-face"></use></svg></button></div>
				<div class="group apart"><button aria-label="Assi"><svg><use href="#axis"></use></svg></button><button class="more" aria-label="Snap"><svg><use href="#magnet"></use></svg></button></div>
			</div>

			<section class="view">
				<div class="tabs"><button class="tab">Vista</button></div>
				<div class="menu view-menu">
					<i class="grip small"></i>
					<a href="#">Viste</a><a href="#">Camere</a><a href="#">Mostra</a><a href="#">Opzioni</a><a href="#">Filtro</a><a href="#">Vista</a>
					<span class="view-icons"><svg><use href="#v-move"></use></svg><svg><use href="#v-zoom"></use></svg><svg><use href="#v-turn"></use></svg><svg><use href="#v-full"></use></svg></span>
				</div>
				<div class="stage">
					<svg class="model" viewBox="0 0 140 900">
						<path d="M31 45V39C32 29 38 25 52 23.500C65 22 80 22 90 24C99 26 102 31 102 39V45z" fill="url(#band)"></path>
						<path d="M30 66H105V80H30z" fill="#b8b8b8"></path>
						<path d="M28 72.500C50 69 90 69 105 71.500M28 103C50 99 90 97 106 99" fill="none" stroke="#111" stroke-width="1.500"></path>
						<path d="M27 48C50 43 90 42 105 45C107 52 107 60 106 68C90 66 50 67 27 72C28 64 28 56 27 48z" fill="url(#band)"></path>
						<path d="M27 50C50 46 90 45 106 48M27 68C50 64 90 63 106 65" fill="none" stroke="#999"></path>
						<path d="M27 76C50 73 90 71 106 74C108 82 108 90 107 98C90 96 50 97 27 101C28 92 28 84 27 76z" fill="url(#band)"></path>
						<path d="M27 79C50 76 90 75 106 77M27 97C50 94 90 93 107 95" fill="none" stroke="#999"></path>
						<path d="M27 60C28 52 50 54 60 55C80 57 105 50 105 60M28 88C28 82 50 84 60 85C80 87 105 80 106 88" fill="none" stroke="#e4e4e4" stroke-opacity=".5" stroke-width="3"></path>
						<path d="M48 43.500L58 42.500M80 42H95" stroke="#333"></path>
						<path d="M103 150V155L105 200L108 270L111 348" fill="none" stroke="#111" stroke-dasharray="25 12"></path>
						<path d="M33 101C50 98 85 98 102 98.500C102 150 104 240 110.500 348C90 349.500 50 349 31 347.500C32 270 35 190 33 101z" fill="url(#strap)"></path>
						<path d="M33 487L60 486.500L111 490L110 493L36 489z" fill="#111"></path>
						<path d="M111.500 491L107 590L105 650V740L103 800L101 820" fill="none" stroke="#111" stroke-dasharray="26 10"></path>
						<path d="M34 488L110 492C108 550 105 600 104 680C104 720 104 770 101 815C98 840 84 868 77 868C71 868 56 840 52 812C48 770 46 670 42 600z" fill="url(#strap-low)"></path>
						<path d="M70.500 417V400" stroke="#189018"></path><path d="M70 416.500H87" stroke="#901c1c"></path><path d="M70 417L76 414" stroke="#2424a0"></path><path d="M69 415h3v3h-3z" fill="#222"></path>
					</svg>

					<div class="hud">
						<div class="slider long"><i></i><label for="s1">CINTURINO SUPERIORE:</label><input id="s1" type="range" min="0" max="100" value="0"><output for="s1">0 %</output><b></b></div>
						<div class="slider short"><i></i><label for="s2">CINT SUP:</label><input id="s2" type="range" min="-50" max="100" value="0"><output for="s2">0 %</output><b></b></div>
						<div class="slider longest"><i></i><label for="s3">CINTURINO INFERIORE:</label><input id="s3" type="range" min="0" max="100" value="0"><output for="s3">0 %</output><b></b></div>
						<div class="slider medium"><i></i><label for="s4">CINT INF:</label><input id="s4" type="range" min="-50" max="100" value="0"><output for="s4">0 %</output><b></b></div>
					</div>

					<div class="distance">Dist : 887.989 cm</div>
					<svg class="compass" viewBox="0 0 44 44">
						<path d="M7.500 17V34" stroke="#30d030"></path><path d="M7 34.500H26" stroke="#c02828"></path><path d="M8 34L14 29" stroke="#2828b8"></path>
						<text x="3" y="12" fill="#30d030">Y</text><text x="14" y="31" fill="#3030c0">Z</text><text x="29" y="39" fill="#c02828">X</text>
					</svg>
				</div>
			</section>

			<section class="xpresso">
				<div class="title"><i></i>Editor XPresso</div>
				<div class="menu xp-menu">
					<i class="grip small"></i>
					<a href="#">File</a><a href="#">Modifica</a><a href="#">Interfaccia</a><a href="#">Vista</a><a href="#">Personalizza</a><a href="#">Calcola</a>
				</div>
				<div class="xp-body">
					<div class="pool">
						<div class="pool-tabs"><button class="tab off">stione X</button><button class="tab">X-Pool</button><button class="arrows" aria-label="Scorri schede"><svg viewBox="0 0 18 18"><path d="M8 6V12L4 9zM10 6V12L14 9z"></path></svg></button></div>
						<div class="menu pool-menu"><i class="grip small"></i><a href="#">Modifica</a>
							<svg class="lens" viewBox="0 0 16 16"><path d="M8 8L15 15" stroke="#111" stroke-width="3"></path><circle cx="5.500" cy="5.500" r="4" fill="#eee" stroke="#222" stroke-width="1.500"></circle></svg>
						</div>
						<div class="search">
							<button aria-label="Cancella"><svg viewBox="0 0 12 12"><circle cx="6" cy="6" r="5.500" fill="#c8c8c8"></circle><path d="M3.500 3.500L8.500 8.500M8.500 3.500L3.500 8.500" stroke="#222" stroke-width="1.500"></path></svg></button>
							<input type="text" aria-label="Cerca" value="GAMMA">
						</div>
						<ul class="pool-tree">
							<li><svg class="d1"><path d="M14 0V5M14 14V18M18 9H21"></path><path class="tri" d="M10 7H18L14 11z"></path></svg>Operatori Sistema</li>
							<li><svg class="d2"><path d="M14 0V18M30 0V5M34 9H37"></path><path class="tri" d="M26 7H34L30 11z"></path></svg>XPresso</li>
							<li><svg class="d3"><path d="M14 0V18M46 0V5M50 9H53"></path><path class="tri" d="M42 7H50L46 11z"></path></svg>Calcola</li>
							<li class="hit"><svg class="d4"><path d="M14 0V18M62 0V9H70"></path></svg>Mappatore</li>
							<li><svg class="d1"><path d="M14 0V18M14 9H21"></path></svg>Presettaggi Sistema</li>
							<li><svg class="d1"><path d="M14 0V9H21"></path></svg>System Presets</li>
						</ul>
						<div class="scroll"><svg viewBox="0 0 8 10"><path d="M7 1V9L1 5z"></path></svg><span><i></i></span><svg viewBox="0 0 8 10"><path d="M1 1V9L7 5z"></path></svg></div>
					</div>

					<div class="graph">
						<div class="graph-head"><i class="blue"></i><span>XGruppo</span><svg><use href="#v-move"></use></svg><svg><use href="#v-zoom"></use></svg><i class="red"></i></div>
						<div class="canvas">
							<svg class="wires"><path d="M198 286H211L244 264H257M386 264H399L428 279H441M209 375H222L241 353H254M383 353H396L441 391H454M241 473H266M395 473H408L412 475H424M221 569H234L252 566H265M394 566H433"></path></svg>
							<div class="node a1"><h3>CINTURINO INFERIORE</h3><p><span></span><span class="out">ROTA INF</span></p></div>
							<div class="node m1"><h3>Mappatore Gamma</h3><p><span class="in">Input</span><span class="out">Output</span></p></div>
							<div class="node b1"><h3>CINTURINO INFERIORE</h3><p><span class="in">Rotazione . P</span></p></div>
							<div class="node a2"><h3>CINTURINO SUPERIORE</h3><p><span></span><span class="out">ROTA SUP</span></p></div>
							<div class="node m2"><h3>Mappatore Gamma</h3><p><span class="in">Input</span><span class="out">Output</span></p></div>
							<div class="node b2"><h3>CINTURINO SUPERIORE</h3><p><span class="in">Rotazione . P</span></p></div>
							<div class="node a3"><h3>CINT SUP</h3><p><span></span><span class="out">CINT SUP</span></p></div>
							<div class="node m3"><h3>Mappatore Gamma</h3><p><span class="in">Input</span><span class="out">Output</span></p></div>
							<div class="node b3"><h3>CINT SUP</h3><p><span class="in">Forza</span></p></div>
							<div class="node a4"><h3>CINT INF</h3><p><span></span><span class="out">CINT INF</span></p></div>
							<div class="node m4"><h3>Mappatore Gamma</h3><p><span class="in">Input</span><span class="out">Output</span></p></div>
							<div class="node b4"><h3>CINT INF</h3><p><span class="in">Forza</span></p></div>
						</div>
						<div class="graph-foot"></div>
					</div>
				</div>
			</section>
		</div>

		<div class="timeline">
			<i class="grip side"></i>
			<div class="ruler">
				<i class="playhead"></i>
				<div class="numbers" id="numbers"></div>
				<div class="ticks" id="ticks"></div>
			</div>
			<div class="frame"><input type="text" aria-label="Fotogramma" value="0 F"><svg viewBox="0 0 8 12"><path d="M4 1L7 5H1zM4 11L7 7H1z"></path></svg></div>
		</div>
	</main>

	<aside>
		<div class="menu side-menu light"><i class="grip small"></i><a href="#">File</a><a href="#">Modifica</a><a href="#">Vista</a><a href="#">Oggetti</a><a href="#">Tag</a><a href="#">Segnalibri</a></div>
		<ul class="objects">
			<li><span class="name"><svg class="l1"><path d="M9.500 0V5M14 10.500H17M5.500 6.500H13.500V14.500H5.500zM7 10.500H12"></path></svg><svg class="obj"><use href="#o-nurbs"></use></svg>HyperNURBS</span><span class="flags green"><i></i><svg><use href="#o-tick"></use></svg></span><span class="tags"></span></li>
			<li><span class="name"><svg class="l2"><path d="M20.500 0V5M25 10.500H28M16.500 6.500H24.500V14.500H16.500zM18 10.500H23"></path></svg><svg class="obj"><use href="#o-null"></use></svg>Nullo</span><span class="flags"><i></i></span><span class="tags"><svg><use href="#o-xp"></use></svg></span></li>
			<li><span class="name"><svg class="l3"><path d="M31.500 0V5M31.500 15V20M36 10.500H39M27.500 6.500H35.500V14.500H27.500zM29 10.500H34"></path></svg><svg class="obj"><use href="#o-poly"></use></svg>CINTURINO SUPERIORE</span><span class="flags"><i></i></span><span class="tags"><svg><use href="#o-tags"></use></svg></span></li>
			<li><span class="name"><svg class="l4"><path d="M31.500 0V20M42.500 0V20M42.500 10.500H50"></path></svg><svg class="obj"><use href="#o-bend"></use></svg>CINT SUP</span><span class="flags redflag"><i></i><svg><use href="#o-tick"></use></svg></span><span class="tags"></span></li>
			<li><span class="name"><svg class="l4"><path d="M31.500 0V20M42.500 0V20M42.500 10.500H50"></path></svg><svg class="obj"><use href="#o-poly"></use></svg>PASSANTE CINTURINO</span><span class="flags"><i></i></span><span class="tags"><svg><use href="#o-tags"></use></svg></span></li>
			<li><span class="name"><svg class="l4"><path d="M31.500 0V20M42.500 0V10.500H50"></path></svg><svg class="obj"><use href="#o-poly"></use></svg>PASSANTE CINTURINO</span><span class="flags"><i></i></span><span class="tags"><svg><use href="#o-tags"></use></svg></span></li>
			<li><span class="name"><svg class="l3"><path d="M31.500 0V5M36 10.500H39M27.500 6.500H35.500V14.500H27.500zM29 10.500H34"></path></svg><svg class="obj"><use href="#o-poly"></use></svg>CINTURINO INFERIORE</span><span class="flags"><i></i></span><span class="tags"><svg><use href="#o-tags"></use></svg></span></li>
			<li><span class="name"><svg class="l4"><path d="M42.500 0V10.500H50"></path></svg><svg class="obj"><use href="#o-bend"></use></svg>CINT INF</span><span class="flags redflag"><i></i><svg><use href="#o-tick"></use></svg></span><span class="tags"></span></li>
			<li class="rest"><span class="name"></span><span class="flags-col"></span><span class="tags"></span></li>
		</ul>
		<div class="menu side-menu"><i class="grip small"></i><a href="#">Modo</a><a href="#">Modifica</a><a href="#">Dati Utente</a></div>
		<div class="attributes"></div>
	</aside>

	<script>
		var LAST_FRAME = 90;

		var numbers = document.getElementById("numbers");
		var ticks = document.getElementById("ticks");

		for (var i = 0; i <= LAST_FRAME; i += 2) {
			var label = document.createElement("span");
			label.textContent = i;
			numbers.appendChild(label);
		}
		for (var j = 0; j < LAST_FRAME; j += 1) {
			ticks.appendChild(document.createElement("i"));
		}
	</script>
</body>
</html>
```
FILE: styles.css
```css
* {
	box-sizing: border-box;
}
html, body {
	margin: 0;
	padding: 0;
}
body {
	display: grid;
	grid-template-columns: minmax(0, 1fr) 304px;
	grid-template-rows: auto 1fr;
	min-height: 100vh;
	background: #474747;
	color: #c0c0c0;
	font: 11px/16px "Noto Sans", "Open Sans", sans-serif;
	overflow: hidden;
}
button, input {
	margin: 0;
	padding: 0;
	border: 0;
	background: none;
	color: inherit;
	font: inherit;
}
a {
	color: inherit;
	text-decoration: none;
}
ul, h3, p {
	margin: 0;
	padding: 0;
	font: inherit;
	list-style: none;
}
.sprite {
	position: absolute;
	width: 0;
	height: 0;
}
.menu {
	display: flex;
	align-items: center;
	gap: 16px;
	white-space: nowrap;
}
.main-menu {
	grid-column: 1 / -1;
	padding: 2px 5px 7px;
	border-top: 1px solid #6c6c6c;
}
main {
	display: flex;
	flex-direction: column;
	min-width: 0;
	border-right: 1px solid #5c5c5c;
}

/* grips */
.grip {
	flex: none;
	background: repeating-linear-gradient(135deg, #8a8a8a 0 1px, #3a3a3a 1px 3px);
}
.grip.tall {
	width: 3px;
	height: 27px;
}
.grip.mid {
	width: 6px;
	margin: 0 1px 0 2px;
}
.grip.flat {
	width: 27px;
	height: 6px;
	margin: 0 2px;
}
.grip.small {
	width: 11px;
	height: 11px;
}
.grip.side {
	width: 5px;
	height: 14px;
}

/* toolbars */
.toolbar {
	display: flex;
	align-items: center;
	gap: 10px;
	padding-top: 1px;
}
.toolbar.second {
	gap: 2px;
	padding-top: 4px;
}
.toolbar.top .grip {
	margin-right: -8px;
}
.group {
	display: flex;
	flex: none;
	overflow: hidden;
	border: 1px solid #2c2c2c;
	border-radius: 4px;
	background: #6b6b6b;
	box-shadow: inset 0 1px 0 #7a7a7a;
}
.group.near {
	margin-left: -7px;
}
.group.cut {
	width: 37px;
	border-right: 0;
	border-radius: 4px 0 0 4px;
}
.group button {
	position: relative;
	flex: none;
	width: 36px;
	height: 33px;
	border-right: 1px solid #575757;
}
.group button:first-child, .group button:last-child {
	width: 35px;
}
.group button:only-child {
	width: 34px;
}
.group button:last-child {
	border-right: 0;
}
.group button.wide {
	width: 51px;
}
.group button.on {
	background: #90a8d0;
}
.group button.more::after {
	content: "";
	position: absolute;
	right: 1px;
	bottom: 1px;
	border: 3px solid #111111;
	border-top-color: transparent;
	border-left-color: transparent;
}
.group svg {
	display: block;
	width: 100%;
	height: 33px;
}
.emboss svg, svg.emboss {
	fill: none;
	stroke: #484848;
	stroke-width: 1.3;
	filter: drop-shadow(1px 1px 0 #9c9c9c);
}
svg.emboss {
	stroke: #5c5c5c;
	filter: drop-shadow(1px 1px 0 #808080);
}
.emboss .deep svg {
	stroke: #2e2e2e;
}
.axis-letter {
	fill: #222222;
	font: 900 17px "DejaVu Sans", sans-serif;
	text-anchor: middle;
}
.tag-letter {
	fill: #ffffff;
	font: 700 16px "Liberation Sans", sans-serif;
	text-anchor: middle;
}
.help-mark {
	fill: #f26a3c;
	stroke: #5c2c18;
	stroke-width: 1px;
	paint-order: stroke;
	font: 900 25px "DejaVu Sans", sans-serif;
}

.work {
	display: flex;
	flex: 1;
	min-height: 0;
	padding: 3px 3px 0 0;
}
.palette {
	display: flex;
	flex-direction: column;
	gap: 3px;
	width: 33px;
	margin-right: 4px;
}
.palette .group {
	flex-direction: column;
	border-left: 0;
	border-radius: 0 4px 4px 0;
}
.palette .group + .grip {
	margin-top: 5px;
}
.palette .apart {
	margin-top: 8px;
}
.palette .group button, .palette .group button:first-child {
	width: 32px;
	height: 35px;
	border-right: 0;
	border-bottom: 1px solid #575757;
}
.palette .group button:first-child {
	height: 34px;
}
.palette .group button:only-child {
	height: 33px;
	border-bottom: 0;
}

/* viewport */
.view {
	display: flex;
	flex: 811;
	flex-direction: column;
	min-width: 0;
	margin-right: 5px;
}
.tabs {
	display: flex;
	border-bottom: 1px solid #6c6c6c;
}
.tab {
	padding: 3px 6px 2px;
	border-radius: 4px 4px 0 0;
	background: #6a6a6a;
	color: #f8a632;
}
.view-menu {
	height: 21px;
	padding: 0 2px 2px 6px;
}
.view-menu .grip, .side-menu .grip, .xp-menu .grip, .pool-menu .grip {
	margin-right: -8px;
}
.view-icons {
	display: flex;
	gap: 5px;
	margin-left: auto;
	color: #1a1a1a;
}
.view-icons svg {
	width: 12px;
	height: 12px;
	fill: #1a1a1a;
}
.stage {
	position: relative;
	flex: 1;
	border: 1px solid #b8b8b8;
	background: #555555;
	overflow: hidden;
}
.model {
	position: absolute;
	top: 102px;
	left: 262px;
	width: 140px;
	height: 900px;
}
.hud {
	position: absolute;
	top: 19px;
	right: 1px;
	width: 293px;
}
.slider {
	display: flex;
	align-items: center;
	height: 16px;
	margin-bottom: 4px;
	padding: 0 3px 0 1px;
	border: 1px solid #3a3a3a;
	border-radius: 2px;
	background: #505050;
	color: #d0d0d0;
	white-space: nowrap;
}
.slider i {
	flex: none;
	width: 6px;
	height: 6px;
	margin-right: 2px;
	border: 1px solid #c4c4c4;
	border-radius: 1px;
}
.slider input {
	-webkit-appearance: none;
	appearance: none;
	flex: none;
	width: 112px;
	height: 14px;
	margin-left: auto;
	background: linear-gradient(#dcdcdc, #dcdcdc) center / 100px 1px no-repeat;
}
.slider input::-webkit-slider-thumb {
	-webkit-appearance: none;
	width: 13px;
	height: 13px;
	background: #dedede;
	clip-path: polygon(50% 0, 100% 100%, 0 100%);
}
.slider output {
	flex: none;
	width: 20px;
	margin-right: 2px;
}
.slider b {
	flex: none;
	width: 11px;
	height: 7px;
	background: #d0d0d0;
	clip-path: polygon(0 0, 100% 0, 50% 100%, 0 0, 20% 14%, 50% 78%, 80% 14%, 20% 14%);
}
.slider.long {
	width: 288px;
	margin-left: 1px;
}
.slider.short {
	width: 216px;
}
.slider.longest {
	width: 293px;
}
.slider.medium {
	width: 228px;
}
.slider.longest output {
	width: 28px;
}
.slider.medium output {
	width: 34px;
}
.distance {
	position: absolute;
	top: 683px;
	right: 4px;
	width: 107px;
	height: 16px;
	padding-left: 2px;
	background: #4a4a4a;
	line-height: 15px;
	color: #d0d0d0;
}
.compass {
	position: absolute;
	bottom: 25px;
	left: 27px;
	width: 44px;
	height: 44px;
}

/* xpresso editor */
.xpresso {
	display: flex;
	flex: 810;
	flex-direction: column;
	min-width: 0;
	border: 1px solid #6c6c6c;
	border-right-color: #333333;
	border-bottom-color: #333333;
}
.title {
	display: flex;
	align-items: center;
	gap: 12px;
	padding: 0 3px 2px;
	background: #303030;
}
.title i {
	width: 9px;
	height: 10px;
	background: linear-gradient(135deg, #a0a0a0, #5c5c5c);
}
.xp-menu {
	height: 23px;
	padding: 0 6px 2px;
	border-bottom: 1px solid #6c6c6c;
}
.xp-body {
	display: flex;
	flex: 1;
	min-height: 0;
}
.pool {
	display: flex;
	flex: none;
	flex-direction: column;
	width: 120px;
	margin-right: 3px;
	border-right: 1px solid #2e2e2e;
	overflow: hidden;
}
.pool-tabs {
	display: flex;
	padding-top: 1px;
	border-bottom: 1px solid #6c6c6c;
}
.pool-tabs .tab {
	padding: 2px 7px 2px 6px;
	white-space: nowrap;
}
.pool-tabs .tab.off {
	width: 49px;
	padding-left: 0;
	background: #333333;
	color: #7c7c7c;
	text-align: left;
	border-radius: 0;
}
.pool-tabs .arrows {
	width: 18px;
	height: 20px;
	margin: 0 auto;
	border: 1px solid #2c2c2c;
	border-radius: 8px;
	background: #7c7c7c;
}
.arrows svg {
	display: block;
	fill: #dddddd;
}
.pool-menu {
	height: 22px;
	padding: 0 0 0 7px;
	border-bottom: 1px solid #6c6c6c;
}
.lens {
	width: 16px;
	height: 16px;
	margin: 0 1px 0 auto;
}
.search {
	display: flex;
	align-items: center;
	gap: 4px;
	height: 27px;
	padding: 0 6px 4px 4px;
	border-bottom: 1px solid #6c6c6c;
}
.search button {
	width: 11px;
	height: 11px;
}
.search svg {
	display: block;
}
.search input {
	flex: 1;
	min-width: 0;
	height: 18px;
	padding-left: 5px;
	border: 1px solid #2c2c2c;
	border-radius: 3px;
	background: #363636;
}
.pool-tree {
	flex: 1;
	padding-top: 1px;
	border-top: 4px solid #3c3c3c;
}
.pool-tree li {
	display: flex;
	align-items: center;
	height: 18px;
	white-space: nowrap;
}
.pool-tree svg {
	flex: none;
	height: 18px;
	fill: none;
	stroke: #909090;
}
.pool-tree .tri {
	fill: #181818;
	stroke: none;
}
.pool-tree .hit {
	color: #f8a632;
}
.d1 {
	width: 22px;
}
.d2 {
	width: 38px;
}
.d3 {
	width: 54px;
}
.d4 {
	width: 70px;
}
.scroll {
	display: flex;
	align-items: center;
	height: 15px;
	padding: 0 2px;
	border-top: 1px solid #6c6c6c;
}
.scroll svg {
	width: 8px;
	height: 10px;
	background: #303030;
	fill: #9a9a9a;
}
.scroll span {
	flex: 1;
	background: #303030;
}
.scroll i {
	display: block;
	width: 54px;
	height: 10px;
	border-radius: 3px;
	background: linear-gradient(#848484, #606060);
}
.graph {
	display: flex;
	flex: 1;
	flex-direction: column;
	min-width: 0;
	padding-top: 3px;
}
.graph-head {
	display: flex;
	align-items: center;
	height: 16px;
	background: #e8e8e8;
	color: #000000;
}
.graph-head span {
	flex: 1;
	text-align: center;
}
.graph-head svg {
	width: 12px;
	height: 12px;
	margin-right: 3px;
}
.graph-head i {
	width: 11px;
	height: 16px;
}
.blue {
	background: #32669c;
}
.red {
	background: #cd6464;
}
.canvas {
	position: relative;
	flex: 1;
	border: solid #ababab;
	border-width: 0 11px;
	background: repeating-linear-gradient(90deg, transparent 0 1px, #b6b6b6 1px 2px, transparent 2px 16px), repeating-linear-gradient(#c1c1c1 0 1px, #b6b6b6 1px 2px, #c1c1c1 2px 16px);
	color: #000000;
	overflow: hidden;
}
.graph-foot {
	height: 17px;
	border-top: 2px solid #333333;
	box-shadow: inset 0 1px 0 #6c6c6c;
}
.wires {
	position: absolute;
	top: 0;
	left: -11px;
	width: 100%;
	height: 100%;
	fill: none;
	stroke: #111111;
}
.node {
	position: absolute;
	height: 38px;
	border: 1px solid #3c3c3c;
	background: linear-gradient(90deg, #ababab 12px, #c1c1c1 12px calc(100% - 12px), #ababab calc(100% - 12px));
	white-space: nowrap;
}
.node h3 {
	height: 16px;
	border: solid #32669c;
	border-width: 0 12px;
	border-right-color: #cd6464;
	background: #e8e8e8;
	text-align: center;
}
.node p {
	display: flex;
	justify-content: space-between;
	padding: 2px 2px 0;
}
.node p span {
	display: flex;
	align-items: center;
	gap: 5px;
}
.node .in::before, .node .out::after {
	content: "";
	width: 8px;
	height: 8px;
	border-radius: 50%;
	background: #32669c;
}
.node .out::after {
	background: #cd6464;
}
.a1 { top: 260px; left: 41px; width: 146px; }
.m1 { top: 238px; left: 246px; width: 129px; }
.b1 { top: 253px; left: 430px; width: 146px; }
.a2 { top: 348px; left: 50px; width: 148px; }
.m2 { top: 326px; left: 243px; width: 129px; }
.b2 { top: 364px; left: 443px; width: 148px; }
.a3 { top: 446px; left: 149px; width: 81px; }
.m3 { top: 446px; left: 255px; width: 129px; }
.b3 { top: 448px; left: 413px; width: 77px; }
.a4 { top: 543px; left: 131px; width: 79px; }
.m4 { top: 540px; left: 254px; width: 129px; }
.b4 { top: 540px; left: 422px; width: 75px; }

/* timeline */
.timeline {
	display: flex;
	align-items: center;
	height: 28px;
	padding: 2px 4px 0 37px;
}
.ruler {
	position: relative;
	flex: 1;
	min-width: 0;
	height: 22px;
	margin: 0 6px 0 5px;
	border-radius: 3px;
	background: #333333;
	box-shadow: inset 0 1px 0 #262626;
}
.playhead {
	position: absolute;
	top: 0;
	left: 0;
	width: 9px;
	height: 15px;
	background: #58e090;
}
.numbers {
	display: flex;
	height: 14px;
	margin: 0 -10px 0 -13px;
	line-height: 15px;
}
.numbers span {
	flex: 1 1 0;
	min-width: 0;
	text-align: center;
}
.numbers span:first-child {
	color: #58e090;
	text-indent: 18px;
}
.ticks {
	display: flex;
	align-items: flex-end;
	height: 7px;
	margin-left: 4px;
	margin-right: 7px;
	border-top: 1px solid #4c4c4c;
	border-right: 1px solid #b0b0b0;
}
.ticks i {
	flex: 1;
	height: 3px;
	border-left: 1px solid #a0a0a0;
}
.ticks i:nth-child(odd) {
	height: 7px;
}
.frame {
	display: flex;
	align-items: center;
	width: 74px;
	height: 19px;
	padding: 0 2px 0 4px;
	border: 1px solid #2c2c2c;
	border-radius: 3px;
	background: #383838;
}
.frame input {
	flex: 1;
	min-width: 0;
}
.frame svg {
	width: 8px;
	height: 12px;
	fill: #a0a0a0;
}

/* object manager */
aside {
	display: flex;
	flex-direction: column;
	min-width: 0;
}
.side-menu {
	gap: 15px;
	height: 23px;
	padding-left: 5px;
	overflow: hidden;
}
.side-menu .grip {
	margin-right: -4px;
}
.side-menu.light {
	background: #6a6a6a;
}
.objects {
	display: flex;
	flex-direction: column;
	height: 460px;
	margin-bottom: 1px;
	border-top: 2px solid #5e5e5e;
	border-bottom: 2px solid #2e2e2e;
	box-shadow: 0 1px 0 #6c6c6c;
}
.objects li {
	display: grid;
	grid-template-columns: minmax(0, 1fr) 39px 62px;
	flex: none;
	height: 20px;
	background: #4c4c4c;
}
.objects li:nth-child(even), .objects li.rest {
	background: #434343;
}
.objects li.rest {
	flex: 1;
}
.name {
	display: flex;
	align-items: center;
	white-space: nowrap;
	border-right: 1px solid #2e2e2e;
}
.name svg {
	flex: none;
	height: 20px;
	fill: none;
	stroke: #a8a8a8;
}
.l1 { width: 19px; }
.l2 { width: 30px; }
.l3 { width: 41px; }
.l4 { width: 52px; }
.name .obj {
	width: 14px;
	height: 16px;
	margin-right: 4px;
	stroke: none;
}
.flags, .flags-col {
	border-right: 1px solid #6c6c6c;
}
.flags {
	display: flex;
	align-items: center;
	padding-left: 5px;
}
.flags i {
	width: 8px;
	height: 8px;
	margin-right: 6px;
	border-radius: 50%;
	background: #8a8a8a;
}
.flags::after {
	content: "";
	order: 1;
	width: 5px;
	height: 13px;
	background: radial-gradient(circle at 50% 3px, #787878 0 2px, transparent 3px), radial-gradient(circle at 50% 10px, #787878 0 2px, transparent 3px);
}
.flags.green::after {
	background: radial-gradient(circle at 50% 3px, #50e898 0 2px, transparent 3px), radial-gradient(circle at 50% 10px, #787878 0 2px, transparent 3px);
}
.flags.redflag::after {
	background: radial-gradient(circle at 50% 3px, #e05454 0 2px, transparent 3px), radial-gradient(circle at 50% 10px, #787878 0 2px, transparent 3px);
}
.flags svg {
	order: 2;
	width: 11px;
	height: 11px;
	margin-left: 2px;
}
.tags {
	padding-left: 2px;
}
.tags svg {
	display: block;
	width: 36px;
	height: 20px;
}
.attributes {
	flex: 1;
	border-top: 1px solid #2e2e2e;
	box-shadow: inset 0 1px 0 #5c5c5c;
}
```
